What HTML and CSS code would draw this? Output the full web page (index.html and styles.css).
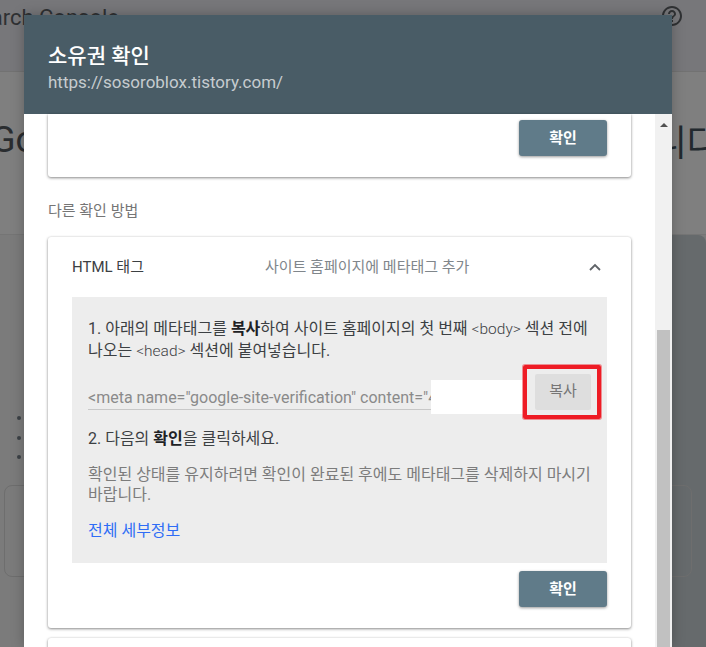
FILE: index.html
```html
<!DOCTYPE html>
<html lang="ko">
<head>
<meta charset="utf-8">
<title>소유권 확인</title>
<link rel="stylesheet" href="styles.css">
</head>
<body>
<div class="page">
  <header class="topbar">
    <span class="brand">Search Console</span>
    <svg class="help" viewBox="0 0 24 24" width="24" height="24"><path fill="#2f3133" d="M11 18h2v-2h-2v2zm1-16C6.480 2 2 6.480 2 12s4.480 10 10 10 10-4.480 10-10S17.520 2 12 2zm0 18c-4.410 0-8-3.590-8-8s3.590-8 8-8 8 3.590 8 8-3.590 8-8 8zm0-14c-2.210 0-4 1.790-4 4h2c0-1.100.9-2 2-2s2 .9 2 2c0 2-3 1.750-3 5h2c0-2.250 3-2.500 3-5 0-2.210-1.790-4-4-4z"/></svg>
  </header>
  <section class="hero">
    <span class="hero-l">Google</span>
    <span class="hero-r">니다</span>
  </section>
  <section class="backdrop-main">
    <ul class="bullets"><li>항목</li><li>항목</li><li>항목</li></ul>
    <div class="outline"></div>
  </section>
</div>

<div class="dialog">
  <div class="dialog-head">
    <h1>소유권 확인</h1>
    <p>https://sosoroblox.tistory.com/</p>
  </div>
  <div class="dialog-body">
    <div class="scroll-content">
      <div class="card first-card">
        <button class="primary">확인</button>
      </div>
      <div class="other-label">다른 확인 방법</div>
      <div class="card method">
        <div class="method-head">
          <span class="method-name">HTML 태그</span>
          <span class="method-desc">사이트 홈페이지에 메타태그 추가</span>
          <svg class="chev" viewBox="0 0 12 8" width="12" height="8"><path d="M1 7l5-5 5 5" fill="none" stroke="#5f6368" stroke-width="1.800"/></svg>
        </div>
        <div class="panel">
          <p class="step">1. 아래의 메타태그를 <b>복사</b>하여 사이트 홈페이지의 첫 번째 <span class="tag">&lt;body&gt;</span> 섹션 전에 나오는 <span class="tag">&lt;head&gt;</span> 섹션에 붙여넣습니다.</p>
          <div class="copy-row">
            <div class="meta-field">&lt;meta name="google-site-verification" content="4</div>
            <div class="redact"></div>
            <div class="highlight"><span class="copy">복사</span></div>
          </div>
          <p class="step step2">2. 다음의 <b>확인</b>을 클릭하세요.</p>
          <p class="note">확인된 상태를 유지하려면 확인이 완료된 후에도 메타태그를 삭제하지 마시기 바랍니다.</p>
          <a class="details" href="#">전체 세부정보</a>
        </div>
        <div class="method-foot"><button class="primary">확인</button></div>
      </div>
      <div class="card next-card"></div>
    </div>
    <div class="scrollbar">
      <svg class="arrow" viewBox="0 0 8 5" width="8" height="5"><path d="M0 5l4-4 4 4z" fill="#505050"/></svg>
      <div class="thumb"></div>
    </div>
  </div>
</div>
</body>
</html>
```
FILE: styles.css
```css
* { box-sizing: border-box; }
html, body { margin: 0; height: 100%; overflow: hidden; }
body {
  width: 706px; height: 647px; position: relative;
  font-family: Roboto, "Noto Sans CJK KR", sans-serif;
  background: #7f7f7f;
}
.page { height: 647px; overflow: hidden; display: flex; flex-direction: column; }
.topbar {
  height: 72px; flex: none; background: #77777a; border-bottom: 1px solid #727272;
  display: flex; align-items: flex-start; justify-content: space-between;
  padding: 3px 22px 0 0;
}
.brand { font-size: 22px; line-height: 30px; color: #2f3133; margin-left: -34px; }
.help { margin-top: 1px; }
.hero {
  height: 163px; flex: none; background: #7f7f7f; border-bottom: 1px solid #757575;
  display: flex; justify-content: space-between; padding-top: 46px; overflow: hidden;
}
.hero-l { font-size: 36px; line-height: 44px; color: #2a2d30; margin-left: -9px; }
.hero-r { font-size: 36px; line-height: 44px; color: #22292e; margin-right: -14px; font-family: "Noto Sans CJK KR", sans-serif; font-weight: 400; }
.backdrop-main { flex: 1; position: relative; background: #7b7b7b; padding-top: 173px; }
.backdrop-main::after {
  content: ""; position: absolute; top: 0; bottom: 0; left: 672px; right: 0;
  background: #666a6c; border-radius: 0 8px 0 0;
}
.bullets { margin: 0; padding: 0 0 0 32px; color: #3c4146; font-size: 14px; line-height: 19.500px; list-style: disc; }
.outline {
  margin: 18px 14px 0 4px; height: 92px; border: 1px solid #6e6e6e; border-radius: 8px;
  position: relative; z-index: 1;
}

.dialog {
  position: absolute; z-index: 2; left: 24px; top: 15px; width: 648px; height: 632px;
  background: #fff; display: flex; flex-direction: column; overflow: hidden;
  box-shadow: 0 0 12px rgba(0,0,0,.25);
}
.dialog-head { height: 99px; flex: none; background: #495c66; padding: 27px 24px 0; color: #fff; }
.dialog-head h1 { margin: 0; font-size: 21px; line-height: 28px; font-weight: 500; }
.dialog-head p { margin: 0; font-size: 17px; line-height: 24px; color: rgba(255,255,255,.7); }
.dialog-body { flex: 1; display: flex; min-height: 0; }
.scroll-content { width: 631px; flex: none; padding: 0 24px; }
.scrollbar { flex: 1; background: #f1f1f1; display: flex; flex-direction: column; align-items: center; padding-top: 8px; }
.arrow { flex: none; }
.thumb { width: 13px; flex: 1; margin-top: 203px; background: #c1c1c1; }

.card { background: #fff; border-radius: 3px; box-shadow: 0 1px 3px rgba(0,0,0,.45), 0 0 2px rgba(0,0,0,.08); }
.first-card { height: 63px; display: flex; justify-content: flex-end; align-items: flex-start; padding: 6px 24px 0 0; border-radius: 0 0 3px 3px; }
.primary {
  width: 88px; height: 36px; border: 0; border-radius: 3px; background: #607b89; color: #fff;
  font: 700 15px/34px Roboto, "Noto Sans CJK KR", sans-serif; padding: 0;
  box-shadow: 0 1px 3px rgba(0,0,0,.4);
}
.other-label { font-size: 15px; line-height: 20px; color: #757575; margin: 24px 0 16px; }
.method { height: 391px; display: flex; flex-direction: column; }
.method-head { height: 60px; flex: none; display: flex; align-items: center; padding: 0 30px 4px 24px; }
.method-name { width: 193px; font-size: 15px; color: #3c4043; }
.method-desc { flex: 1; font-size: 15px; color: #80868b; }
.chev { flex: none; margin-top: 3px; }
.panel { margin: 0 24px; height: 266px; flex: none; background: #ededed; padding: 21px 16px 0; font-size: 16px; color: #3c4043; }
.panel b { font-weight: 700; color: #202124; }
.tag { font-weight: 300; font-size: 15.500px; }
.step { margin: 0; line-height: 22px; }
.copy-row { position: relative; height: 36px; margin-top: 13px; }
.meta-field { width: 343px; height: 35px; border-bottom: 1px solid #c8c8c8; color: #8a8a8a; font-size: 16px; line-height: 20px; padding-top: 13px; white-space: nowrap; overflow: hidden; }
.redact { position: absolute; left: 343px; top: 5px; width: 92px; height: 34px; background: #fff; }
.highlight {
  position: absolute; left: 435px; top: -10px; width: 78px; height: 54px;
  border: 4px solid #ee1c25; border-radius: 2px;
  box-shadow: 0 0 0 1px rgba(238,28,37,.45);
  display: flex; align-items: center; justify-content: center;
}
.copy { width: 56px; height: 36px; margin-left: 2px; border-radius: 2px; background: #dedede; color: #757575; font-size: 15px; line-height: 34px; text-align: center; }
.step2 { margin-top: 17px; }
.note { margin: 15px 0 0; line-height: 20px; color: #7c7c7c; }
.details { display: block; margin-top: 16px; line-height: 20px; color: #2f6df6; text-decoration: none; }
.method-foot { flex: 1; display: flex; justify-content: flex-end; align-items: flex-start; padding: 8px 24px 0 0; }
.next-card { height: 60px; margin-top: 10px; }
```
